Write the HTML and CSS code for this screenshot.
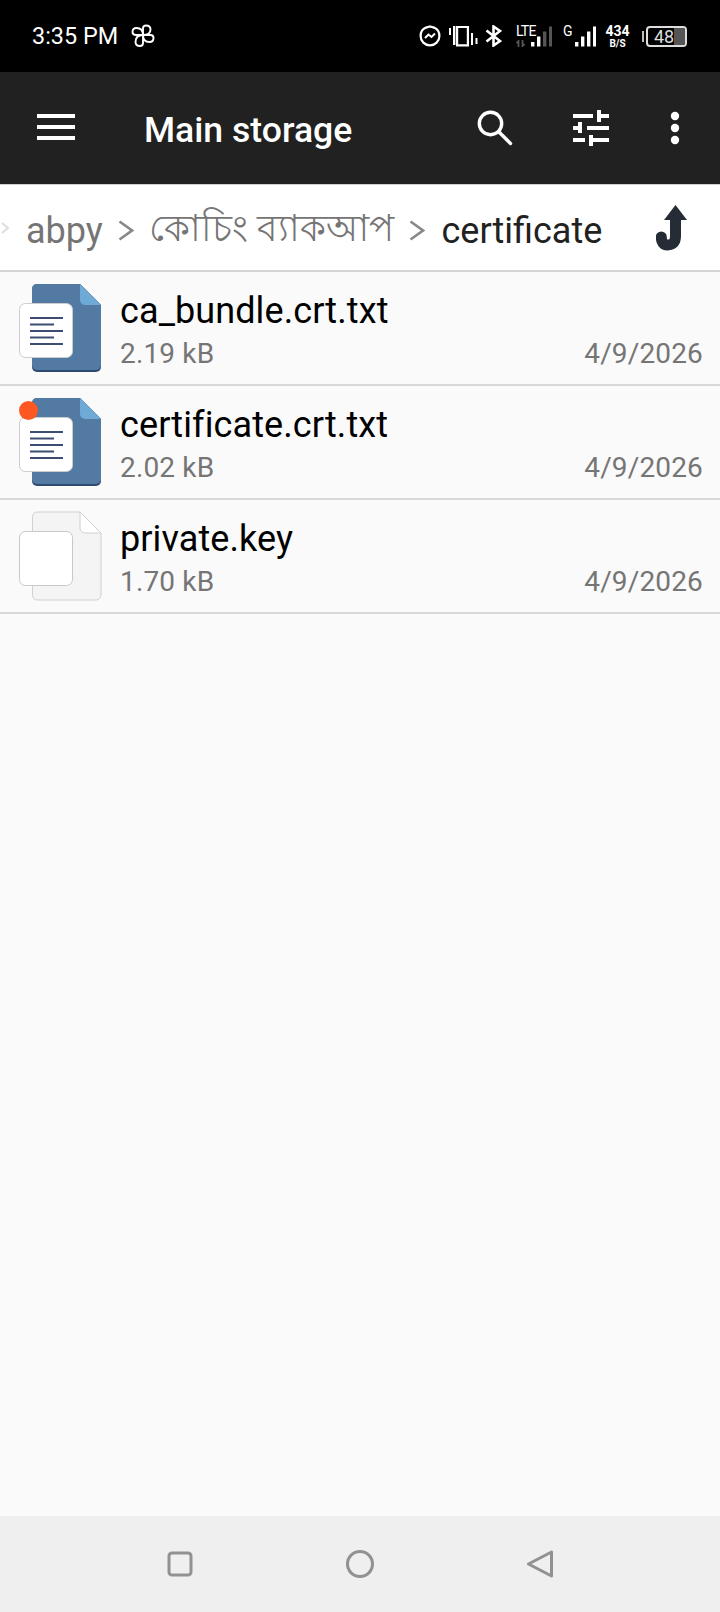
FILE: index.html
```html
<!DOCTYPE html>
<html lang="en">
<head>
    <meta charset="UTF-8">
    <meta name="viewport" content="width=device-width, initial-scale=1.0">
    <title>Main storage</title>
    <link rel="stylesheet" href="styles.css">
</head>
<body>
    <div class="app">
        <!-- status bar -->
        <div class="status-bar">
            <div class="status-left">
                <span class="clock">3:35 PM</span>
                <svg class="pinwheel" width="24" height="24" viewBox="0 0 24 24" fill="none" stroke="#fff" stroke-width="1.9" stroke-linejoin="round">
                    <path d="M12 11V4Q12 1.500 15 1.500Q19.500 1.500 19.500 5.500Q19.500 11 12 11Z"/>
                    <path d="M12 11H5Q1.500 11 1.500 8Q1.500 4 5.500 4Q12 4 12 11Z"/>
                    <path d="M12 11H19.500Q22.500 11 22.500 14Q22.500 18 18.500 18Q12 18 12 11Z"/>
                    <path d="M12 11V19Q12 22 9 22Q4.500 22 4.500 18Q4.500 11 12 11Z"/>
                </svg>
            </div>
            <div class="status-right">
                <svg width="22" height="22" viewBox="0 0 22 22" fill="none" stroke="#fff">
                    <path stroke-width="2.2" d="M11 1.500L15 2.600C18.500 4 20.400 7.400 20.400 11C20.400 16.200 16.200 20.400 11 20.400C5.800 20.400 1.600 16.200 1.600 11C1.600 7.400 3.500 4 7 2.600Z"/>
                    <path stroke-width="2" d="M6 13L9.500 9.500L12.500 12L16 8.500"/>
                </svg>
                <svg width="30" height="21" viewBox="0 0 30 21" fill="#fff">
                    <rect x="1" y="2" width="2" height="7"/>
                    <rect x="5" y="0" width="2.400" height="19"/>
                    <path fill-rule="evenodd" d="M8 0H21V20.500H8ZM10.200 2V18.300H18.800V2Z"/>
                    <rect x="23" y="7" width="2" height="12"/>
                    <rect x="27.500" y="12" width="2" height="6"/>
                </svg>
                <svg width="17" height="22" viewBox="0 0 17 22" fill="none" stroke="#fff" stroke-width="2.6">
                    <path d="M1.500 5.500L15 16L8.500 20.500V1.500L15 6L1.500 16.500"/>
                </svg>
                <div class="net-lte">
                    <span class="net-label">LTE</span>
                    <svg class="lte-arrows" width="10" height="7" viewBox="0 0 10 7" fill="none" stroke="#555" stroke-width="1.800">
                        <path d="M0.500 3L2.500 1V7"/>
                        <path d="M6.500 0V6L8.500 4"/>
                    </svg>
                    <svg class="lte-bars" width="21" height="21" viewBox="0 0 21 21">
                        <rect x="0" y="16" width="3.400" height="4.500" fill="#fff"/>
                        <rect x="6" y="10.500" width="3.400" height="10" fill="#fff"/>
                        <rect x="12" y="5.500" width="3.400" height="15" fill="#555"/>
                        <rect x="18" y="0.500" width="3" height="20" fill="#555"/>
                    </svg>
                </div>
                <div class="net-g">
                    <span class="net-label">G</span>
                    <svg width="21" height="21" viewBox="0 0 21 21" fill="#fff">
                        <rect x="0" y="16" width="3.400" height="4.500"/>
                        <rect x="6" y="10.500" width="3.400" height="10"/>
                        <rect x="12" y="5.500" width="3.400" height="15"/>
                        <rect x="18" y="0.500" width="3" height="20"/>
                    </svg>
                </div>
                <div class="net-speed">
                    <span class="speed-num">434</span>
                    <span class="speed-unit">B/S</span>
                </div>
                <div class="battery">
                    <span class="battery-tip"></span>
                    <span class="battery-body">
                        <span class="battery-level"></span>
                        <span class="battery-num">48</span>
                    </span>
                </div>
            </div>
        </div>

        <!-- toolbar -->
        <div class="toolbar">
            <div class="menu-icon">
                <span></span><span></span><span></span>
            </div>
            <div class="toolbar-title">Main storage</div>
            <svg class="tool-search" width="36" height="36" viewBox="0 0 36 36" fill="none" stroke="#fff" stroke-width="3.400">
                <circle cx="13.500" cy="13.500" r="11.200"/>
                <path d="M22 22L33.500 33.500" stroke-linecap="round"/>
            </svg>
            <svg class="tool-sliders" width="36" height="36" viewBox="0 0 36 36" fill="#fff">
                <rect x="0" y="4" width="20" height="4"/>
                <rect x="24" y="4" width="12" height="4"/>
                <rect x="24" y="0" width="4" height="12"/>
                <rect x="0" y="16" width="9" height="4"/>
                <rect x="5" y="12" width="4" height="11"/>
                <rect x="14" y="16" width="22" height="4"/>
                <rect x="0" y="28" width="12" height="4"/>
                <rect x="16" y="28" width="20" height="4"/>
                <rect x="16" y="25" width="4" height="11"/>
            </svg>
            <svg class="tool-more" width="10" height="34" viewBox="0 0 10 34" fill="#fff">
                <circle cx="5" cy="5" r="4.200"/>
                <circle cx="5" cy="17" r="4.200"/>
                <circle cx="5" cy="29" r="4.200"/>
            </svg>
        </div>

        <!-- breadcrumb -->
        <div class="breadcrumb">
            <svg class="crumb-edge" width="8" height="14" viewBox="0 0 8 14" fill="none" stroke="#ddd" stroke-width="2"><path d="M1 2L7 7L1 12"/></svg>
            <span class="crumb">abpy</span>
            <svg class="crumb-sep" width="16" height="21" viewBox="0 0 16 21" fill="none" stroke="#888" stroke-width="2.600"><path d="M1.500 1.500L14 10.500L1.500 19.500"/></svg>
            <span class="crumb crumb-bn">কোচিং ব্যাকআপ</span>
            <svg class="crumb-sep" width="16" height="21" viewBox="0 0 16 21" fill="none" stroke="#888" stroke-width="2.600"><path d="M1.500 1.500L14 10.500L1.500 19.500"/></svg>
            <span class="crumb crumb-current">certificate</span>
            <svg class="up-icon" width="31" height="46" viewBox="0 0 31 46">
                <path d="M19.500 0L31 15H8Z" fill="#252c35"/>
                <path d="M19.500 12V31C19.500 37 17 40 11.500 40C7.500 40 5.300 37 5.300 32" fill="none" stroke="#252c35" stroke-width="11" stroke-linecap="round"/>
            </svg>
        </div>

        <!-- file list -->
        <div class="file-list">
            <div class="file-row">
                <div class="file-icon">
                    <svg width="84" height="90" viewBox="0 0 84 90">
                        <path d="M14 6a5 5 0 0 1 5-5H62L83 22V84a5 5 0 0 1-5 5H19a5 5 0 0 1-5-5Z" fill="#2f4a70"/>
                        <path d="M14 6a5 5 0 0 1 5-5H62L83 22V82a5 5 0 0 1-5 5H19a5 5 0 0 1-5-5Z" fill="#527aa3"/>
                        <path d="M62 1L83 22H67a5 5 0 0 1-5-5Z" fill="#6fa9d6"/>
                        <rect x="1.500" y="20.500" width="53" height="54" rx="6" fill="#fff" stroke="#ccc"/>
                        <g fill="#3d4c73">
                            <rect x="12" y="34" width="33" height="2"/>
                            <rect x="12" y="40.500" width="24" height="2"/>
                            <rect x="12" y="47" width="33" height="2"/>
                            <rect x="12" y="53.500" width="24" height="2"/>
                            <rect x="12" y="60" width="33" height="2"/>
                        </g>
                    </svg>
                </div>
                <div class="file-info">
                    <div class="file-name">ca_bundle.crt.txt</div>
                    <div class="file-meta">
                        <span>2.19 kB</span>
                        <span>4/9/2026</span>
                    </div>
                </div>
            </div>
            <div class="file-row">
                <div class="file-icon">
                    <svg width="84" height="90" viewBox="0 0 84 90">
                        <path d="M14 6a5 5 0 0 1 5-5H62L83 22V84a5 5 0 0 1-5 5H19a5 5 0 0 1-5-5Z" fill="#2f4a70"/>
                        <path d="M14 6a5 5 0 0 1 5-5H62L83 22V82a5 5 0 0 1-5 5H19a5 5 0 0 1-5-5Z" fill="#527aa3"/>
                        <path d="M62 1L83 22H67a5 5 0 0 1-5-5Z" fill="#6fa9d6"/>
                        <rect x="1.500" y="20.500" width="53" height="54" rx="6" fill="#fff" stroke="#ccc"/>
                        <g fill="#3d4c73">
                            <rect x="12" y="34" width="33" height="2"/>
                            <rect x="12" y="40.500" width="24" height="2"/>
                            <rect x="12" y="47" width="33" height="2"/>
                            <rect x="12" y="53.500" width="24" height="2"/>
                            <rect x="12" y="60" width="33" height="2"/>
                        </g>
                    </svg>
                    <span class="new-dot"></span>
                </div>
                <div class="file-info">
                    <div class="file-name">certificate.crt.txt</div>
                    <div class="file-meta">
                        <span>2.02 kB</span>
                        <span>4/9/2026</span>
                    </div>
                </div>
            </div>
            <div class="file-row">
                <div class="file-icon">
                    <svg width="84" height="90" viewBox="0 0 84 90">
                        <path d="M14.500 6a5 5 0 0 1 5-5H62L83 22V84a5 5 0 0 1-5 5H19.500a5 5 0 0 1-5-5Z" fill="#f4f4f4" stroke="#d0d0d0"/>
                        <path d="M62 1L83 22H67a5 5 0 0 1-5-5Z" fill="#fff" stroke="#d0d0d0"/>
                        <rect x="1.500" y="20.500" width="53" height="54" rx="6" fill="#fff" stroke="#c8c8c8"/>
                    </svg>
                </div>
                <div class="file-info">
                    <div class="file-name">private.key</div>
                    <div class="file-meta">
                        <span>1.70 kB</span>
                        <span>4/9/2026</span>
                    </div>
                </div>
            </div>
        </div>

        <!-- navigation bar -->
        <div class="nav-bar">
            <svg width="28" height="28" viewBox="0 0 28 28" fill="none" stroke="#919191" stroke-width="3"><rect x="3" y="3" width="22" height="22" rx="3"/></svg>
            <svg width="28" height="28" viewBox="0 0 28 28" fill="none" stroke="#919191" stroke-width="3"><circle cx="14" cy="14" r="12.500"/></svg>
            <svg width="28" height="28" viewBox="0 0 28 28" fill="none" stroke="#919191" stroke-width="3" stroke-linejoin="round"><path d="M25.500 2V26L2.500 14Z"/></svg>
        </div>
    </div>
</body>
</html>
```

FILE: styles.css
```css
* {
    box-sizing: border-box;
}

body {
    margin: 0;
    font-family: Roboto, "Noto Sans", sans-serif;
    background-color: #fafafa;
}

.app {
    width: 720px;
    height: 1612px;
    display: flex;
    flex-direction: column;
    overflow: hidden;
}

/* status bar */
.status-bar {
    height: 72px;
    flex: none;
    background-color: #000;
    color: #fff;
    display: flex;
    justify-content: space-between;
    align-items: center;
    padding: 0 33px 0 32px;
}

.status-left {
    display: flex;
    align-items: center;
    gap: 13px;
}

.clock {
    font-size: 23.400px;
}

.status-right {
    display: flex;
    align-items: center;
    gap: 7px;
}

.net-lte, .net-g {
    position: relative;
    display: flex;
    align-items: flex-end;
    height: 22px;
}

.net-lte {
    width: 36px;
    justify-content: flex-end;
    margin-left: 7px;
}

.net-g {
    width: 33px;
    justify-content: flex-end;
    margin-left: 4px;
}

.net-label {
    position: absolute;
    left: 0;
    top: -2px;
    font-size: 14px;
    letter-spacing: -0.8px;
    line-height: 16px;
}

.lte-arrows {
    position: absolute;
    left: 0;
    bottom: 0;
}

.net-speed {
    display: flex;
    flex-direction: column;
    align-items: center;
    width: 25px;
    margin-left: 2px;
    font-weight: 700;
    line-height: 1;
}

.speed-num {
    font-size: 14px;
}

.speed-unit {
    font-size: 10px;
    margin-top: 1px;
}

.battery {
    display: flex;
    align-items: center;
    gap: 2px;
    margin-left: 5px;
}

.battery-tip {
    width: 2px;
    height: 11px;
    background-color: #bbb;
}

.battery-body {
    position: relative;
    width: 41px;
    height: 21px;
    border: 2px solid #ddd;
    border-radius: 4px;
    display: flex;
    align-items: center;
    overflow: hidden;
    padding-left: 6px;
}

.battery-level {
    position: absolute;
    right: 0;
    top: 0;
    bottom: 0;
    width: 11px;
    background-color: #555;
}

.battery-num {
    position: relative;
    font-size: 18px;
    color: #ddd;
}

/* toolbar */
.toolbar {
    height: 112px;
    flex: none;
    background-color: #212121;
    color: #fff;
    display: flex;
    align-items: center;
    padding: 0 0 0 37px;
}

.menu-icon {
    width: 38px;
    display: flex;
    flex-direction: column;
    gap: 7px;
    margin-bottom: 2px;
}

.menu-icon span {
    height: 4px;
    background-color: #fff;
}

.toolbar-title {
    font-size: 35.600px;
    font-weight: 500;
    margin-left: 69px;
    width: 333px;
    padding-top: 4px;
}

.tool-sliders {
    margin-left: 60px;
}

.tool-more {
    margin-left: 61px;
}

/* breadcrumb */
.breadcrumb {
    height: 88px;
    flex: none;
    background-color: #fff;
    border-top: 1px solid #d0d0d0;
    border-bottom: 2px solid #d4d4d4;
    display: flex;
    align-items: center;
    font-size: 36px;
    white-space: nowrap;
}

.crumb {
    color: #757575;
    padding-top: 6px;
}

.crumb-edge {
    margin: 0 17px 0 1px;
}

.crumb-sep {
    margin: 6px 15px 0;
}

.crumb-bn {
    font-family: "Noto Sans", "Noto Sans CJK SC", sans-serif;
    font-size: 37px;
    padding-top: 0;
    margin-top: 5px;
}

.crumb-current {
    color: #212121;
    margin-left: 1px;
}

.up-icon {
    margin-left: auto;
    margin-right: 33px;
}

/* file list */
.file-list {
    flex: 1;
    background-color: #fafafa;
}

.file-row {
    height: 114px;
    border-bottom: 2px solid #d8d8d8;
    display: flex;
    align-items: center;
    padding: 0 17px 0 18px;
}

.file-icon {
    position: relative;
    width: 102px;
    flex: none;
    display: flex;
    align-items: center;
}

.new-dot {
    position: absolute;
    left: 1px;
    top: 4px;
    width: 19px;
    height: 19px;
    border-radius: 50%;
    background-color: #ff5722;
}

.file-info {
    flex: 1;
    min-width: 0;
    padding-top: 4px;
}

.file-name {
    font-size: 36px;
    line-height: 46px;
    letter-spacing: 0.1px;
    color: #000;
}

.file-meta {
    display: flex;
    justify-content: space-between;
    margin-top: 2px;
    font-size: 28px;
    line-height: 36px;
    letter-spacing: 0.15px;
    font-kerning: none;
    color: #757575;
}

/* navigation bar */
.nav-bar {
    height: 96px;
    flex: none;
    background-color: #efefef;
    display: flex;
    align-items: center;
    justify-content: center;
    gap: 152px;
}
```
